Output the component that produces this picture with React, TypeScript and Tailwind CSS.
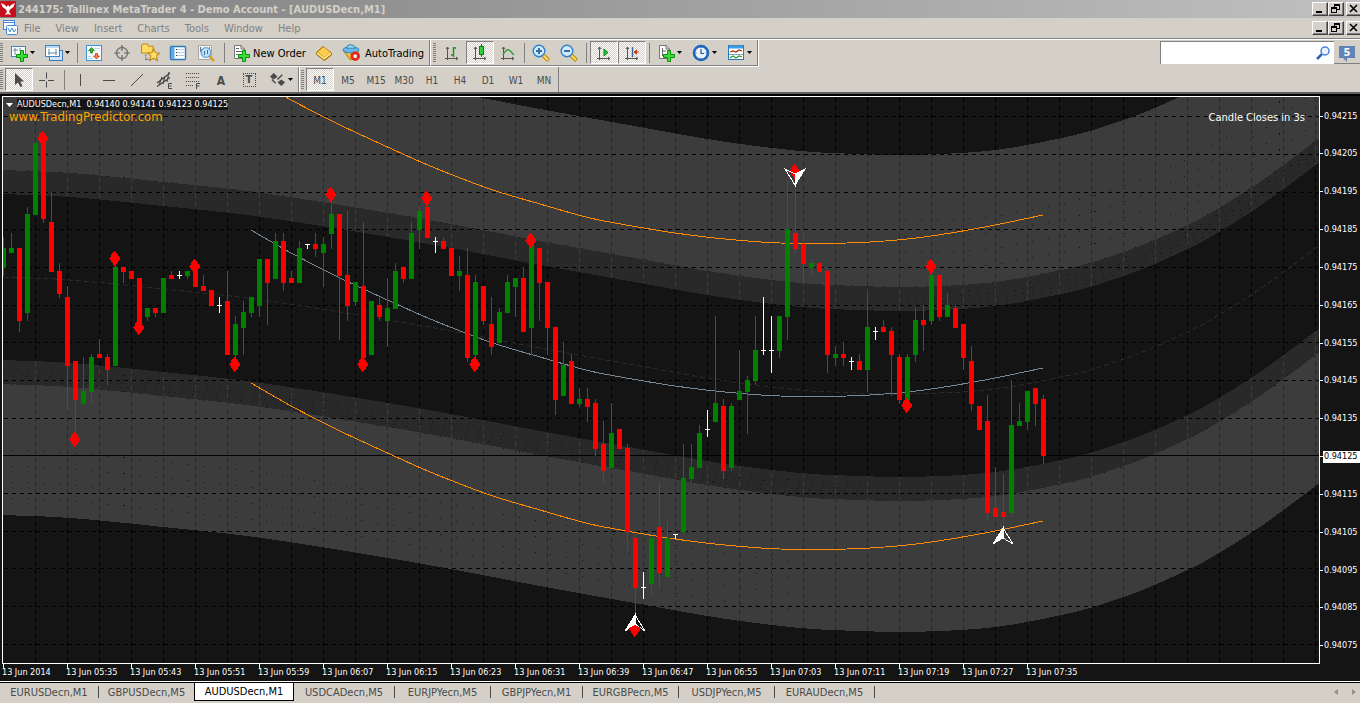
import type { ReactNode } from "react";

type Point = [number, number];
// kind, high, body top, body bottom, low (dojis: body top = body bottom)
type Candle = ["g" | "r" | "w", number, number, number, number];

const CANDLES: Candle[] = [
  ["g", 237, 248, 268, 276], ["g", 233, 248, 253, 253], ["r", 248, 248, 321, 332], ["g", 207, 214, 313, 321],
  ["g", 143, 143, 215, 215], ["r", 143, 143, 219, 223], ["r", 192, 222, 272, 272], ["r", 263, 271, 294, 298],
  ["r", 286, 297, 366, 411], ["r", 361, 361, 400, 433], ["g", 357, 391, 404, 404], ["g", 354, 357, 392, 404],
  ["r", 339, 354, 358, 358], ["r", 354, 357, 370, 385], ["g", 263, 267, 366, 366], ["r", 267, 267, 272, 283],
  ["r", 271, 271, 279, 279], ["r", 278, 278, 323, 326], ["g", 308, 308, 317, 321], ["r", 308, 308, 313, 317],
  ["g", 278, 278, 313, 313], ["r", 271, 275, 279, 279], ["w", 271, 275, 275, 279], ["g", 271, 271, 276, 279],
  ["r", 270, 270, 287, 287], ["r", 275, 286, 291, 291], ["r", 290, 290, 306, 306], ["w", 297, 305, 305, 313],
  ["r", 271, 301, 355, 355], ["g", 316, 324, 355, 361], ["g", 301, 312, 328, 355], ["g", 297, 297, 313, 317],
  ["g", 259, 259, 306, 317], ["r", 259, 259, 283, 325], ["g", 233, 241, 279, 279], ["r", 233, 241, 283, 291],
  ["r", 271, 278, 283, 283], ["g", 241, 248, 283, 283], ["w", 244, 244, 244, 249], ["r", 233, 244, 249, 257],
  ["g", 237, 244, 253, 287], ["g", 200, 214, 234, 249], ["r", 214, 214, 276, 340], ["r", 211, 275, 306, 321],
  ["g", 282, 282, 302, 306], ["r", 222, 286, 358, 360], ["g", 301, 301, 355, 355], ["r", 297, 305, 317, 321],
  ["g", 278, 308, 321, 347], ["g", 263, 271, 309, 309], ["r", 267, 267, 279, 283], ["g", 222, 233, 279, 279],
  ["g", 207, 211, 230, 249], ["r", 203, 207, 238, 238], ["w", 237, 241, 241, 253], ["r", 237, 241, 249, 249],
  ["r", 248, 248, 276, 276], ["g", 256, 271, 276, 291], ["r", 248, 275, 358, 362], ["g", 275, 282, 355, 360],
  ["r", 286, 286, 321, 325], ["r", 297, 324, 347, 355], ["g", 308, 312, 343, 343], ["g", 275, 282, 313, 313],
  ["g", 278, 278, 287, 317], ["r", 267, 278, 332, 332], ["g", 244, 244, 328, 355], ["r", 248, 248, 283, 321],
  ["r", 282, 282, 328, 355], ["r", 327, 327, 400, 415], ["g", 342, 365, 396, 396], ["r", 354, 361, 404, 404],
  ["g", 388, 399, 404, 407], ["r", 388, 399, 407, 422], ["r", 399, 403, 449, 456], ["r", 421, 444, 471, 483],
  ["g", 403, 433, 468, 468], ["r", 429, 429, 449, 449], ["r", 444, 448, 532, 551], ["r", 534, 538, 588, 625],
  ["w", 572, 587, 587, 599], ["g", 538, 538, 584, 596], ["r", 482, 527, 573, 588], ["g", 519, 538, 577, 577],
  ["w", 534, 534, 534, 539], ["g", 444, 478, 532, 535], ["g", 444, 467, 479, 483], ["g", 425, 433, 468, 468],
  ["w", 410, 429, 429, 437], ["g", 316, 403, 422, 422], ["r", 399, 406, 471, 479], ["g", 403, 406, 468, 471],
  ["g", 350, 391, 400, 400], ["g", 376, 380, 392, 434], ["g", 316, 350, 381, 385], ["w", 297, 350, 350, 355],
  ["w", 316, 350, 350, 373], ["g", 316, 316, 351, 358], ["g", 180, 229, 317, 340], ["r", 180, 233, 249, 253],
  ["r", 233, 244, 264, 284], ["g", 259, 263, 268, 276], ["r", 263, 263, 272, 272], ["r", 267, 271, 355, 373],
  ["g", 346, 354, 358, 366], ["r", 342, 354, 358, 366], ["w", 357, 361, 361, 370], ["r", 354, 361, 370, 370],
  ["g", 293, 327, 370, 392], ["w", 327, 331, 331, 340], ["r", 320, 327, 332, 332], ["r", 327, 331, 355, 396],
  ["r", 354, 357, 400, 404], ["g", 354, 357, 400, 402], ["g", 308, 320, 355, 362], ["r", 305, 320, 325, 351],
  ["g", 272, 275, 321, 325], ["r", 275, 275, 317, 321], ["g", 293, 305, 317, 317], ["r", 305, 308, 328, 328],
  ["r", 324, 324, 358, 370], ["r", 346, 361, 404, 411], ["r", 406, 406, 430, 430], ["r", 395, 421, 513, 520],
  ["r", 467, 508, 517, 517], ["r", 474, 512, 517, 524], ["g", 380, 425, 513, 517], ["g", 403, 421, 426, 426],
  ["g", 391, 391, 422, 430], ["r", 388, 388, 404, 426], ["r", 395, 399, 456, 464],
];

const CANDLE_COLORS = { g: "#008000", r: "#ff0000", w: "#ffffff" };

const SIGNALS: Point[] = [
  [42, 138], [74, 439], [114, 258], [138, 327], [194, 266], [234, 364], [330, 194], [362, 364], [426, 198],
  [474, 364], [530, 240], [906, 405], [930, 266],
];

// Upper edge of the inner band. Every other band edge is this line, shifted.
const BAND: Point[] = [
  [-20, 168], [3, 170], [55, 172], [105, 176], [163, 182], [247, 191], [340, 205], [440, 222], [540, 241],
  [640, 259], [720, 273], [800, 283], [860, 286], [905, 287], [960, 285], [1003, 281], [1047, 273], [1090, 263],
  [1140, 246], [1179, 229], [1207, 215], [1260, 182], [1325, 134],
];

const CHANNEL: Point[] = [
  [251, 77], [293, 101], [340, 125], [403, 154], [435, 168], [490, 189], [540, 204], [590, 218], [638, 227],
  [675, 233], [725, 239], [780, 243], [847, 243], [897, 240], [938, 235], [990, 226], [1043, 215],
];

const PRICE_ROWS = [116, 154, 192, 229, 267, 305, 342, 380, 418, 493, 531, 568, 606, 644];
const PRICES = [
  "0.94215", "0.94205", "0.94195", "0.94185", "0.94175", "0.94165", "0.94155", "0.94145", "0.94135", "0.94125",
  "0.94115", "0.94105", "0.94095", "0.94085", "0.94075",
];
const TIMES = [
  "13 Jun 2014", "13 Jun 05:35", "13 Jun 05:43", "13 Jun 05:51", "13 Jun 05:59", "13 Jun 06:07", "13 Jun 06:15",
  "13 Jun 06:23", "13 Jun 06:31", "13 Jun 06:39", "13 Jun 06:47", "13 Jun 06:55", "13 Jun 07:03", "13 Jun 07:11",
  "13 Jun 07:19", "13 Jun 07:27", "13 Jun 07:35",
];
const MENUS = ["File", "View", "Insert", "Charts", "Tools", "Window", "Help"];
const PERIODS = ["M1", "M5", "M15", "M30", "H1", "H4", "D1", "W1", "MN"];
const TABS = [
  { name: "EURUSDecn,M1", width: "w-[99px]", line: true },
  { name: "GBPUSDecn,M5", width: "w-[95px]", line: false },
  { name: "AUDUSDecn,M1", width: "w-[100px]", line: false },
  { name: "USDCADecn,M5", width: "w-[101px]", line: true },
  { name: "EURJPYecn,M5", width: "w-24", line: true },
  { name: "GBPJPYecn,M1", width: "w-[92px]", line: true },
  { name: "EURGBPecn,M5", width: "w-24", line: true },
  { name: "USDJPYecn,M5", width: "w-24", line: true },
  { name: "EURAUDecn,M5", width: "w-[100px]", line: true },
];

// Catmull-Rom through the points, as cubic beziers
function curve(points: Point[], dy: number): string {
  let d = `M${points[0][0]} ${points[0][1] + dy}`;
  for (let i = 0; i < points.length - 1; i++) {
    const p0 = points[Math.max(i - 1, 0)];
    const p1 = points[i];
    const p2 = points[i + 1];
    const p3 = points[Math.min(i + 2, points.length - 1)];
    d += ` C${p1[0] + (p2[0] - p0[0]) / 6} ${p1[1] + (p2[1] - p0[1]) / 6 + dy}`;
    d += ` ${p2[0] - (p3[0] - p1[0]) / 6} ${p2[1] - (p3[1] - p1[1]) / 6 + dy} ${p2[0]} ${p2[1] + dy}`;
  }
  return d;
}

function band(from: number, to: number): string {
  const reversed = [...BAND].reverse();
  return `${curve(BAND, from)} ${curve(reversed, to).replace("M", "L")} Z`;
}

const OUTER = `${band(-132, 0)} ${band(214, 345)}`;
const INNER = `${band(0, 24)} ${band(190, 214)}`;

function VerticalGrid({ color, clip }: { color: string; clip?: string }) {
  return (
    <g stroke={color} strokeDasharray="5 3" clipPath={clip}>
      {Array.from({ length: 41 }, (_, i) => (
        <line key={i} x1={35.5 + i * 32} x2={35.5 + i * 32} y1={97} y2={663} />
      ))}
    </g>
  );
}

function Plot() {
  return (
    <svg
      viewBox="3 97 1316 566"
      preserveAspectRatio="none"
      className="absolute inset-0 h-full w-full"
      shapeRendering="crispEdges"
      fill="none"
      role="img"
      aria-label="AUDUSDecn M1 candlestick chart"
    >
      <defs>
        <clipPath id="outer"><path d={OUTER} /></clipPath>
        <clipPath id="inner"><path d={INNER} /></clipPath>
      </defs>
      <path d={OUTER} fill="#3c3c3c" />
      <path d={INNER} fill="#292929" />
      <VerticalGrid color="#000000" />
      <VerticalGrid color="#292929" clip="url(#outer)" />
      <VerticalGrid color="#3c3c3c" clip="url(#inner)" />

      {/* dotted projections inside the bands */}
      <g stroke="#141414">
        <path d={curve(BAND, 0)} strokeDasharray="1 15" />
        <path d={curve(BAND, 214)} strokeDasharray="1 15" />
        {[198, 202, 206, 210].map((dy, i) => (
          <path key={dy} d={curve(BAND.slice(0, 13), dy)} strokeDasharray="1 11" strokeDashoffset={i} />
        ))}
        {[6, 11, 16, 20].map((dy, i) => (
          <path key={dy} d={curve(BAND.slice(13), dy)} strokeDasharray="1 8" strokeDashoffset={-i} />
        ))}
        {[-18, -34, -50, -66].map((dy) => (
          <path key={dy} d={curve(BAND.slice(13), dy)} strokeDasharray="1 15" />
        ))}
        {[280, 296, 312, 328].map((dy) => (
          <path key={dy} d={curve(BAND.slice(0, 12), dy)} strokeDasharray="1 15" />
        ))}
      </g>

      <g stroke="#000000" strokeDasharray="4 4">
        {PRICE_ROWS.map((y) => (
          <line key={y} x1={4} x2={1319} y1={y + 0.5} y2={y + 0.5} />
        ))}
      </g>
      <path d={curve(BAND, 107)} stroke="#292929" strokeDasharray="5 3" />
      <line x1={3} x2={1319} y1={455.5} y2={455.5} stroke="#000000" />

      <path d={curve(CHANNEL, 0)} stroke="#ff8c00" />
      <path d={curve(CHANNEL, 306)} stroke="#ff8c00" />
      <path d={curve(CHANNEL, 153)} stroke="#778899" />

      {CANDLES.map(([kind, high, top, bottom, low], i) => {
        const x = 3 + i * 8;
        return (
          <g key={i} fill={CANDLE_COLORS[kind]}>
            <rect x={x} y={high} width={1} height={low - high} />
            <rect x={x - 2} y={top} width={5} height={Math.max(bottom - top, 1)} />
          </g>
        );
      })}

      {[...SIGNALS, [794, 171] as Point, [634, 629] as Point].map(([x, y]) => (
        <path
          key={`${x}-${y}`}
          transform={`translate(${x} ${y})`}
          d="M0-7H1L2-5 4-4V-2L6 0V1L4 3V4L2 6 1 8H0L-1 6-3 4V3L-5 1V0L-3-2V-4L-1-5Z"
          fill="#ff0000"
        />
      ))}
      <g stroke="#ffffff">
        <path d="M785 169L795 174V185Z" />
        <path d="M805 169L795 174V185Z" fill="#ffffff" />
        <path d="M635 615L625 631L635 624Z" fill="#ffffff" />
        <path d="M635 615L645 631L635 624Z" />
        <path d="M1003 528L993 544L1003 538Z" fill="#ffffff" />
        <path d="M1003 528L1013 544L1003 538Z" />
      </g>
      <path d="M630 627H640V629L635 635H634L630 630Z" fill="#ff0000" />
    </svg>
  );
}

function Grip() {
  return (
    <span className="mr-0.5 h-5 w-[3px] shrink-0 bg-[repeating-linear-gradient(#808080_0_1px,#d4d0c8_1px_2px)]" />
  );
}

function Divider({ className }: { className: string }) {
  return (
    <span className={`flex h-5 shrink-0 justify-center ${className}`}>
      <span className="w-px bg-[#808080]" />
    </span>
  );
}

function ToolButton({
  label,
  pressed,
  wide,
  children,
}: {
  label: string;
  pressed?: boolean;
  wide?: boolean;
  children: ReactNode;
}) {
  return (
    <button
      type="button"
      aria-label={label}
      aria-pressed={pressed}
      className={`flex h-[23px] shrink-0 items-center justify-center ${wide ? "w-[35px] gap-0.5" : "w-7"} ${
        pressed
          ? "border border-t-[#808080] border-l-[#808080] border-r-white border-b-white bg-[repeating-conic-gradient(#ffffff_0_25%,#d4d0c8_0_50%)] bg-[length:2px_2px]"
          : ""
      }`}
    >
      {children}
      {wide && (
        <svg width="5" height="3" viewBox="0 0 5 3" aria-hidden>
          <path d="M0 0H5L2.5 3Z" />
        </svg>
      )}
    </button>
  );
}

function Icon({ children, size = 18 }: { children: ReactNode; size?: number }) {
  return (
    <svg width={size} height={size} viewBox="0 0 18 18" fill="none" className="shrink-0" aria-hidden>
      {children}
    </svg>
  );
}

function GreenPlus() {
  return (
    <path
      d="M10.5 6.5H13.5V10.5H17.5V13.5H13.5V17.5H10.5V13.5H6.5V10.5H10.5Z"
      fill="#38e038"
      stroke="#0a900a"
    />
  );
}

function Axes() {
  return (
    <path d="M4.5 3V16M2 14.5H15M3 5L4.5 3 6 5M13 13L15 14.5 13 16" stroke="#555555" />
  );
}

function Magnifier({ plus }: { plus?: boolean }) {
  return (
    <Icon>
      <path d="M11 11L16.5 16.5" stroke="#b8860b" strokeWidth="4" />
      <path d="M11 11L16 16" stroke="#ffe060" strokeWidth="2" />
      <circle cx="7" cy="7" r="5.8" fill="#d0eaff" stroke="#2f7fd0" strokeWidth="1.4" />
      <path d={plus ? "M4 7H10M7 4V10" : "M4 7H10"} stroke="#356f9f" strokeWidth="2" />
    </Icon>
  );
}

function MainToolbar() {
  return (
    <div className="flex h-[27px] items-center border-r border-b border-white">
      <div className="flex h-full items-center border-r border-b border-[#808080]">
        <Grip />
        <ToolButton label="New chart" wide>
          <Icon>
            <rect x="1.5" y="2.5" width="14" height="10" fill="#ffffff" stroke="#3d85c0" />
            <path d="M5 4V11M3 6H8M10 4V7" stroke="#5f87a8" />
            <GreenPlus />
          </Icon>
        </ToolButton>
        <ToolButton label="Profiles" wide>
          <Icon>
            <rect x="4.5" y="6.500" width="13" height="10" fill="#cfe4f8" stroke="#3d78b8" />
            <rect x=".5" y="1.500" width="14" height="11" fill="#ffffff" stroke="#3d85c0" />
            <path d="M1 3H14" stroke="#7fb2e0" />
            <path d="M4 5V11M3 9H12M11 5V11" stroke="#5f87a8" />
          </Icon>
        </ToolButton>
        <Divider className="w-[5px]" />
        <ToolButton label="Market Watch">
          <Icon>
            <rect x="1.5" y="1.5" width="15" height="15" fill="#f7fbff" stroke="#3d93d8" />
            <path d="M9 4.5H15M3 12.5H7M3 14.5H8" stroke="#c5d6e4" />
            <path d="M6.500 3.500L9.500 6.500H7.500V9H5.500V6.500H3.500Z" fill="#35b535" stroke="#137813" strokeWidth=".7" />
            <path d="M11.500 15L14.500 12H12.500V9.500H10.500V12H8.500Z" fill="#ff8050" stroke="#b82d08" strokeWidth=".7" />
          </Icon>
        </ToolButton>
        <ToolButton label="Data Window">
          <Icon>
            <circle cx="9" cy="9" r="5.5" stroke="#777777" strokeWidth="1.4" />
            <path d="M9 1V7M9 11V17M1 9H7M11 9H17" stroke="#666666" strokeWidth="1.2" />
          </Icon>
        </ToolButton>
        <ToolButton label="Navigator">
          <Icon size={19}>
            <path d="M.5 9.5V2.5L2 1H6L7 3H11.5V9.5Z" fill="#ffdc60" stroke="#c58c15" />
            <path d="M4.5 11V16M5 15.5H8" stroke="#555555" strokeDasharray="1 1" />
            <path
              d="M12 5.5L13.7 9.2 17.5 9.7 14.7 12.3 15.5 16.5 12 14.4 8.5 16.5 9.3 12.3 6.5 9.7 10.3 9.2Z"
              fill="#ffe070"
              stroke="#c08515"
            />
          </Icon>
        </ToolButton>
        <ToolButton label="Terminal">
          <Icon>
            <rect x="1.5" y="2.500" width="15" height="13" rx="1" fill="#ffffff" stroke="#2d78c0" strokeWidth="1.4" />
            <path d="M2 3H5.500V15H2Z" fill="#5fa8e8" />
            <path d="M7 5.5H15M7 8.5H15M7 11.5H15" stroke="#b9cbe5" />
            <path d="M7 5.5H8M7 8.5H8M7 11.5H8" stroke="#333333" />
          </Icon>
        </ToolButton>
        <ToolButton label="Strategy Tester">
          <Icon>
            <rect x="1.5" y="1.5" width="13" height="14" fill="#f2f2ee" stroke="#aaaaaa" />
            <path d="M3.5 3V8M3 5.5H6M12.5 3V6" stroke="#667788" />
            <path d="M12 12L17 17" stroke="#d3a326" strokeWidth="2.5" />
            <circle cx="9" cy="8.5" r="4.8" fill="#bfe0fa" stroke="#6aa6d8" strokeWidth="1.3" />
            <path d="M7.5 7V11M10.5 6V10" stroke="#3f6f9f" />
          </Icon>
        </ToolButton>
        <Divider className="w-2" />
        <button
          type="button"
          className="flex h-[23px] w-[82px] shrink-0 items-center gap-[3px] pl-1 text-[11px] whitespace-nowrap"
        >
          <Icon>
            <path d="M2.5 1.5H9L12.5 5V14.5H2.5Z" fill="#ffffff" stroke="#777777" />
            <path d="M9 1.5V5H12.5M4 4.5H7M4 7.5H11M4 10.5H8" stroke="#666666" />
            <GreenPlus />
          </Icon>
          <span className="pt-0.5">New Order</span>
        </button>
        <ToolButton label="MetaEditor">
          <Icon>
            <path d="M1.500 8.500L8 2.500L16.500 9V11L9.500 16.500L1.500 10.500Z" fill="#d8960c" stroke="#a06c08" />
            <path d="M2 9L9 14.500L16 9.500" stroke="#fff0a8" strokeWidth="1.4" />
            <path d="M3 8L8.500 3L15.500 8.500L9.500 13Z" fill="#fccb50" />
          </Icon>
        </ToolButton>
        <button
          type="button"
          className="flex h-[23px] w-[91px] shrink-0 items-center gap-1 pl-1 text-[11px] whitespace-nowrap"
        >
          <Icon size={19}>
            <path d="M2 8L8 16L15 9Z" fill="#f6ca3d" stroke="#b98512" />
            <ellipse cx="8.5" cy="6.5" rx="7.5" ry="3" fill="#6db8ea" stroke="#3288b8" />
            <path d="M4.5 5C5 .5 11 .5 12.500 5Z" fill="#9bd5f5" stroke="#3288b8" />
            <circle cx="12.500" cy="12.500" r="4.500" fill="#e02a1c" />
            <rect x="11" y="11" width="3" height="3" fill="#ffffff" />
          </Icon>
          <span className="pt-0.5">AutoTrading</span>
        </button>
      </div>
      <div className="flex h-full items-center border-r border-b border-l border-r-[#808080] border-b-[#808080] border-l-white pl-0.5">
        <Grip />
        <ToolButton label="Bar Chart">
          <Icon>
            <Axes />
            <path d="M10.500 3V13M10.500 4H13M8 11H10.500" stroke="#16921f" strokeWidth="1.4" />
          </Icon>
        </ToolButton>
        <ToolButton label="Candlesticks" pressed>
          <Icon>
            <Axes />
            <path d="M10.500 0V13" stroke="#0b7d18" />
            <rect x="8.500" y="2.500" width="4" height="8" fill="#2fd03e" stroke="#0b7d18" />
          </Icon>
        </ToolButton>
        <ToolButton label="Line Chart">
          <Icon>
            <Axes />
            <path d="M4 11C8 3 10 5 15 11" stroke="#2f9d38" strokeWidth="1.3" />
          </Icon>
        </ToolButton>
        <Divider className="w-[5px]" />
        <ToolButton label="Zoom In"><Magnifier plus /></ToolButton>
        <ToolButton label="Zoom Out"><Magnifier /></ToolButton>
        <Divider className="w-[7px]" />
        <ToolButton label="Auto Scroll" pressed>
          <Icon>
            <Axes />
            <path d="M9 5L13 8.500L9 12Z" fill="#25c035" stroke="#0b8518" />
          </Icon>
        </ToolButton>
        <ToolButton label="Chart Shift" pressed>
          <Icon>
            <Axes />
            <path d="M9.500 3V13" stroke="#2d65a0" strokeWidth="1.4" />
            <path d="M16 8H12M13.500 6L11 8L13.500 10Z" fill="#c83a12" stroke="#c83a12" />
          </Icon>
        </ToolButton>
        <Divider className="w-1.5" />
        <ToolButton label="Indicators" wide>
          <Icon>
            <path d="M2.500 1.500H9L12.500 5V14.500H2.500Z" fill="#ffffff" stroke="#777777" />
            <path d="M5.500 4V12M5 7H9M9 1.500V5H12.500" stroke="#666666" />
            <GreenPlus />
          </Icon>
        </ToolButton>
        <ToolButton label="Periods" wide>
          <Icon>
            <circle cx="9" cy="9" r="7" fill="#e9f3fb" stroke="#1c66bd" strokeWidth="2.600" />
            <path d="M9 5V9.500H12M9 3V4M9 14V15M3.500 9H4.500M13.500 9H14.500" stroke="#345577" strokeWidth="1.200" />
          </Icon>
        </ToolButton>
        <ToolButton label="Templates" wide>
          <Icon>
            <rect x="1.500" y="1.500" width="15" height="14" fill="#ffffff" stroke="#2f78b8" />
            <path d="M2 3H16" stroke="#3f9be8" strokeWidth="3" />
            <path d="M2 10.500H16" stroke="#7aa8cc" />
            <path d="M3 8L6 7L9 8L12 6L15 7" stroke="#a02c18" strokeWidth="1.300" />
            <path d="M3 14L6 12L9 14L12 12L15 13" stroke="#34933d" strokeWidth="1.300" />
          </Icon>
        </ToolButton>
      </div>
    </div>
  );
}

function DrawingToolbar() {
  return (
    <div className="flex h-[25px] items-center text-[#4a4a4a]">
      <div className="flex h-full items-center border-r border-[#808080]">
        <Grip />
        <ToolButton label="Cursor" pressed>
          <Icon>
            <path d="M5 2V14L8 11.500L10.500 16L12.500 15L10.300 10.500H14Z" fill="#4a4a4a" />
          </Icon>
        </ToolButton>
        <ToolButton label="Crosshair">
          <Icon>
            <path d="M8.500 1.500V7.500M8.500 10.500V16.500M1 9.500H7M10 9.500H16" stroke="#4a4a4a" />
          </Icon>
        </ToolButton>
        <Divider className="w-1.5" />
        <ToolButton label="Vertical Line">
          <Icon><path d="M8.500 3V15" stroke="#4a4a4a" /></Icon>
        </ToolButton>
        <ToolButton label="Horizontal Line">
          <Icon><path d="M3 9.500H15" stroke="#4a4a4a" /></Icon>
        </ToolButton>
        <ToolButton label="Trendline">
          <Icon><path d="M3 15L15 3" stroke="#4a4a4a" /></Icon>
        </ToolButton>
        <ToolButton label="Equidistant Channel">
          <Icon>
            <path d="M1 12L14 2M1 15.500L14 6.500M3 14L6 6M7 13L9 5M11 11L13 1" stroke="#4a4a4a" strokeWidth="1.200" />
            <path d="M16 12.500H12.500V17.500H16M12.500 15H15.500" stroke="#4a4a4a" />
          </Icon>
        </ToolButton>
        <ToolButton label="Fibonacci Retracement">
          <Icon>
            <path d="M2 2.500H16M2 6.500H16M2 10.500H16M2 14.500H10" stroke="#4a4a4a" strokeDasharray="1 1" />
            <path d="M16 12.500H12.500V18M12.500 15H15.500" stroke="#4a4a4a" />
          </Icon>
        </ToolButton>
        <ToolButton label="Text">
          <span className="pt-0.5 text-xs font-bold">A</span>
        </ToolButton>
        <ToolButton label="Text Label">
          <span className="flex h-[14px] w-[13px] items-center justify-center border border-dotted border-[#4a4a4a] text-[11px] font-bold">
            T
          </span>
        </ToolButton>
        <ToolButton label="Arrows" wide>
          <Icon size={17}>
            <path d="M5 2L9 6L5 9L1 6Z" fill="#4a4a4a" />
            <path d="M13 9L17 12L13 16L9 12Z" fill="#4a4a4a" />
            <path d="M3 9L7 13M9 9L14 4" stroke="#4a4a4a" strokeWidth="1.500" />
          </Icon>
        </ToolButton>
      </div>
      <div className="flex h-full items-center border-r border-l border-r-[#808080] border-l-white pl-px">
        <Grip />
        {PERIODS.map((period) => (
          <ToolButton key={period} label={period} pressed={period === "M1"}>
            <span className="pt-0.5 text-[10px]">{period}</span>
          </ToolButton>
        ))}
      </div>
    </div>
  );
}

function WindowButtons() {
  const box =
    "flex h-[14px] w-4 items-center justify-center border border-t-white border-l-white border-r-[#404040] border-b-[#404040] bg-[#d4d0c8] shadow-[inset_-1px_-1px_#808080]";
  return (
    <div className="-mr-0.5 ml-auto flex shrink-0">
      <button type="button" aria-label="Minimize" className={box}>
        <svg width="10" height="10" viewBox="0 0 10 10" aria-hidden><path d="M1 7H7V9H1Z" /></svg>
      </button>
      <button type="button" aria-label="Restore" className={box}>
        <svg width="10" height="10" viewBox="0 0 10 10" fill="none" stroke="#000000" shapeRendering="crispEdges" aria-hidden>
          <path d="M3.500 3V.500H8.500V5.500H6M3 1.500H9M1 4.500H6" />
          <path d="M.500 3.500H5.500V8.500H.500Z" />
        </svg>
      </button>
      <button type="button" aria-label="Close" className={`ml-0.5 ${box}`}>
        <svg width="10" height="10" viewBox="0 0 10 10" stroke="#000000" strokeWidth="1.600" aria-hidden>
          <path d="M1 1L8 8M8 1L1 8" />
        </svg>
      </button>
    </div>
  );
}

export default function App() {
  return (
    <div className="flex h-screen flex-col overflow-hidden bg-[#d4d0c8] font-['DejaVu_Sans_Condensed','DejaVu_Sans','Noto_Sans',sans-serif] text-[11px] leading-none text-black">
      <header className="flex h-[18px] shrink-0 items-center bg-linear-to-r from-[#808080] to-[#c0c0c0]">
        <svg width="16" height="16" viewBox="0 0 16 16" aria-hidden>
          <rect width="16" height="16" rx="1" fill="#c8101c" />
          <path
            d="M1 2L5 4L6.500 6L7.500 4.500H9L9.500 6L11 4L15 2L13.500 6L10 8.500L9 10.500L11 14L8 13L5 14L7 10.500L6 8.500L2.500 6Z"
            fill="#ffffff"
          />
        </svg>
        <h1 className="ml-0.5 text-[11px] font-bold whitespace-nowrap text-[#d4d0c8]">
          244175: Tallinex MetaTrader 4 - Demo Account - [AUDUSDecn,M1]
        </h1>
        <WindowButtons />
      </header>

      <nav className="flex h-5 shrink-0 items-center text-[#808080]">
        <svg width="16" height="16" viewBox="0 0 16 16" fill="none" className="mr-1.5 ml-0.5" aria-hidden>
          <rect x="1.500" y=".500" width="11" height="9" fill="#ffffff" stroke="#3f87d8" />
          <path d="M2 2.500H12" stroke="#3f87d8" />
          <rect x="4.500" y="5.500" width="11" height="9" rx="1" fill="#ffffff" stroke="#3f87d8" />
          <path d="M6 8L8 12L10 8L12 12L14 9" stroke="#3f87d8" />
        </svg>
        <div className="flex gap-[15px]">
          {MENUS.map((menu) => (
            <button key={menu} type="button">{menu}</button>
          ))}
        </div>
        <WindowButtons />
      </nav>

      <div className="flex shrink-0 border-t border-[#808080]">
        <div className="flex flex-1 items-start justify-between border-t border-white">
          <MainToolbar />
          <div className="mt-px flex h-[23px]">
            <label className="flex w-[174px] items-center border-t border-l border-[#808080] bg-white pr-1">
              <input type="text" aria-label="Search" className="h-full min-w-0 flex-1 px-1 outline-none" />
              <svg width="14" height="14" viewBox="0 0 14 14" fill="none" aria-hidden>
                <path d="M1 13L6 8" stroke="#2f5fc0" strokeWidth="2.500" />
                <circle cx="9" cy="5" r="4" fill="#eaf3ff" stroke="#4d7fd8" strokeWidth="1.500" />
              </svg>
            </label>
            <button
              type="button"
              aria-label="5 messages"
              className="flex w-[26px] items-center justify-center border-b border-[#808080]"
            >
              <span className="relative flex h-3 w-4 items-center justify-center bg-[#6283b5] text-[11px] font-bold text-white">
                5
                <svg width="5" height="4" viewBox="0 0 5 4" className="absolute top-3 left-1" aria-hidden>
                  <path d="M0 0H4V4Z" fill="#6283b5" />
                </svg>
              </span>
            </button>
          </div>
        </div>
      </div>
      <DrawingToolbar />

      <main className="flex min-h-0 flex-1 flex-col border-t-2 border-[#606060] bg-black text-[9px] text-white">
        <div className="mt-0.5 flex min-h-0 flex-1 bg-[#141414]">
          <div className="relative ml-0.5 flex-1 border border-white">
            <Plot />
            <div className="relative flex justify-between">
              <div>
                <div className="mt-0.5 flex items-center gap-1 pl-[3px]">
                  <svg width="7" height="4" viewBox="0 0 7 4" aria-hidden><path d="M0 0H7L3.500 4Z" fill="#ffffff" /></svg>
                  <span className="bg-[#141414] py-px whitespace-pre">
                    {"AUDUSDecn,M1  0.94140 0.94141 0.94123 0.94125"}
                  </span>
                </div>
                <p className="pl-1.5 text-[13px] text-[#ffa500]">www.TradingPredictor.com</p>
              </div>
              <p className="mt-[15px] mr-[14px] text-[11px]">Candle Closes in 3s</p>
            </div>
          </div>
          <div className="flex w-10 flex-col justify-between pt-[14px] pb-3">
            {PRICES.map((price) => (
              <div key={price} className="flex h-3 items-center">
                <span className="h-px w-[3px] bg-white" />
                <span
                  className={
                    price === "0.94125" ? "flex h-3 flex-1 items-center bg-white pl-px text-black" : "pl-px"
                  }
                >
                  {price}
                </span>
              </div>
            ))}
          </div>
        </div>
        <div className="flex h-[17px] shrink-0 overflow-hidden bg-[#141414] pl-[3px]">
          {TIMES.map((time) => (
            <div key={time} className="w-16 shrink-0">
              <div className="h-1 border-l border-white" />
              <span className="-ml-px whitespace-nowrap">{time}</span>
            </div>
          ))}
        </div>
      </main>

      <footer className="flex h-[22px] shrink-0 flex-col border-t border-white">
        <div className="flex flex-1 items-start border-t border-black text-[11px] text-[#4a4a4a]">
          {TABS.map((tab) => (
            <button
              key={tab.name}
              type="button"
              className={
                tab.name === "AUDUSDecn,M1"
                  ? `h-[18px] shrink-0 border-x border-b border-black bg-white text-black ${tab.width}`
                  : `flex h-[18px] shrink-0 items-center ${tab.width}`
              }
            >
              <span className="flex-1 text-center">{tab.name}</span>
              {tab.line && <span className="h-3 w-px bg-[#4a4a4a]" />}
            </button>
          ))}
          <div className="mt-1.5 mr-1 ml-auto flex gap-3.5">
            <button type="button" aria-label="Scroll left">
              <svg width="4" height="6" viewBox="0 0 4 6" aria-hidden><path d="M4 0V6L0 3Z" fill="#909090" /></svg>
            </button>
            <button type="button" aria-label="Scroll right">
              <svg width="4" height="6" viewBox="0 0 4 6" aria-hidden><path d="M0 0V6L4 3Z" fill="#909090" /></svg>
            </button>
          </div>
        </div>
      </footer>
    </div>
  );
}
